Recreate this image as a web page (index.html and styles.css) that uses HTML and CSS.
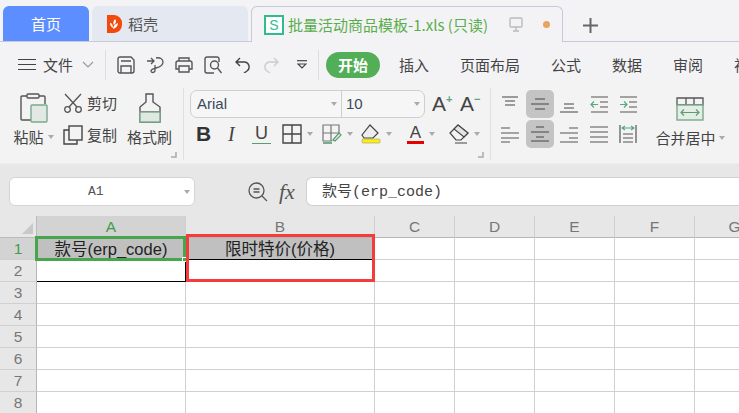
FILE: index.html
```html
<!DOCTYPE html>
<html lang="zh">
<head>
<meta charset="utf-8">
<title>批量活动商品模板-1.xls</title>
<link rel="stylesheet" href="styles.css">
</head>
<body>
<div class="app">
  <div class="tabs">
    <div class="tab tab-home">首页</div>
    <div class="tab tab-shell">
      <svg class="i20" viewBox="0 0 18 20"><path d="M1 1h7a8 8 0 0 1 8 9 8 8 0 0 1-8 9H1z" fill="#f4490c"/><path d="M9 5c2 2 1 4-1 6-1-1-1-4 1-6zM4 9c2 0 3 2 3 5-2-1-3-3-3-5zM12 9c0 3-2 5-5 6 0-3 2-5 5-6z" fill="#fff"/></svg>
      <span>稻壳</span>
    </div>
    <div class="tab tab-file">
      <span class="s-logo">S</span>
      <span class="file-name">批量活动商品模板-1.xls (只读)</span>
      <svg class="monitor" viewBox="0 0 14 15"><rect x="1" y="1" width="12" height="9" rx="1" fill="none" stroke="#bbb" stroke-width="1.4"/><path d="M7 10v4M4 14h6" stroke="#bbb" stroke-width="1.4" fill="none"/></svg>
      <span class="dot"></span>
    </div>
    <svg class="plus" viewBox="0 0 15 15"><path d="M7.5 0v15M0 7.5h15" stroke="#666" stroke-width="2"/></svg>
  </div>

  <div class="menu">
    <svg class="burger" viewBox="0 0 18 11"><path d="M0 .5h18M0 5.5h18M0 10.500h18" stroke="#444" stroke-width="1.100"/></svg>
    <span class="menu-file">文件</span>
    <svg class="chev" viewBox="0 0 12 7"><path d="M1 1l5 5 5-5" fill="none" stroke="#999" stroke-width="1.100"/></svg>
    <span class="vline"></span>
    <div class="quick">
      <svg class="i18" viewBox="0 0 18 18"><path d="M3 1h11l3 3v11a2 2 0 0 1-2 2H3a2 2 0 0 1-2-2V3a2 2 0 0 1 2-2zM4 17v-7h10v7M4 5h10" fill="none" stroke="#555" stroke-width="1.400"/></svg>
      <svg class="i18" viewBox="0 0 18 18"><path d="M1 5h7M5 2l3 3-3 3M10 2c4-1 7 1 7 4s-3 5-7 6c-3 1-5 1-5 3s3 2 4 0V9" fill="none" stroke="#555" stroke-width="1.300"/></svg>
      <svg class="i18" viewBox="0 0 18 18"><path d="M4 5V2h10v3M4 13H1V7a2 2 0 0 1 2-2h12a2 2 0 0 1 2 2v6h-3M4 10h10v6H4z" fill="none" stroke="#555" stroke-width="1.400"/></svg>
      <svg class="i18" viewBox="0 0 18 18"><path d="M15 6V3a2 2 0 0 0-2-2H3a2 2 0 0 0-2 2v12a2 2 0 0 0 2 2h7" fill="none" stroke="#555" stroke-width="1.400"/><circle cx="10.500" cy="9" r="4" fill="none" stroke="#555" stroke-width="1.400"/><path d="M13.500 12l4 5" stroke="#555" stroke-width="1.400"/></svg>
      <svg class="i16 undo" viewBox="0 0 16 16"><path d="M5 1L1 5l4 4M1 5h9a5 5 0 0 1 2 9l-3 2" fill="none" stroke="#444" stroke-width="1.400"/></svg>
      <svg class="i16 redo" viewBox="0 0 16 16"><path d="M11 1l4 4-4 4M15 5H6a5 5 0 0 0-2 9l3 2" fill="none" stroke="#ccc" stroke-width="1.400"/></svg>
      <svg class="more" viewBox="0 0 10 9"><path d="M0 .7h10" stroke="#444" stroke-width="1.200"/><path d="M1 4l4 4 4-4z" fill="none" stroke="#444" stroke-width="1.200"/></svg>
    </div>
    <span class="vline vline2"></span>
    <span class="pill">开始</span>
    <span class="m m1">插入</span>
    <span class="m m2">页面布局</span>
    <span class="m m3">公式</span>
    <span class="m m3">数据</span>
    <span class="m m3">审阅</span>
    <span class="m m3">视图</span>
  </div>

  <div class="ribbon">
    <div class="group g-clip">
      <div class="col col-paste">
        <svg class="big" viewBox="0 0 30 30"><path d="M8 3H3a1 1 0 0 0-1 1v22a1 1 0 0 0 1 1h10M20 3h5a1 1 0 0 1 1 1v7" fill="none" stroke="#555" stroke-width="1.400"/><rect x="8" y="1" width="12" height="4" rx="1" fill="none" stroke="#555" stroke-width="1.400"/><rect x="12" y="12" width="16" height="17" rx="1" fill="#e2e9e4" stroke="#7aa98b" stroke-width="1.400"/></svg>
        <span class="lbl">粘贴<i class="tri"></i></span>
      </div>
      <div class="col col-small">
        <div class="sm sm1">
          <svg class="i20" viewBox="0 0 20 20"><path d="M2 1l12 13M18 1L6 14" fill="none" stroke="#555" stroke-width="1.300"/><circle cx="4.500" cy="16.500" r="2.800" fill="none" stroke="#555" stroke-width="1.300"/><circle cx="15.500" cy="16.500" r="2.800" fill="none" stroke="#555" stroke-width="1.300"/></svg>
          <span>剪切</span>
        </div>
        <div class="sm">
          <svg class="i20" viewBox="0 0 20 20"><rect x="6" y="1" width="13" height="14" fill="none" stroke="#444" stroke-width="1.400"/><path d="M6 5H1v14h13v-4" fill="none" stroke="#444" stroke-width="1.400"/></svg>
          <span>复制</span>
        </div>
      </div>
      <div class="col col-brush">
        <svg class="big" viewBox="0 0 24 30"><path d="M8 1h7v8l7 5v15H2V14l6-5zM2 19h20" fill="none" stroke="#555" stroke-width="1.400"/><rect x="2" y="19" width="20" height="10" fill="#dfe8e1" stroke="#7aa98b" stroke-width="1.400"/></svg>
        <span class="lbl">格式刷</span>
      </div>
      <svg class="corner" viewBox="0 0 6 6"><path d="M5 0v5H0" fill="none" stroke="#aaa" stroke-width="1.500"/></svg>
    </div>

    <div class="group g-font">
      <div class="font-top">
        <div class="fontbox">
          <div class="fb-name"><span>Arial</span><i class="tri"></i></div>
          <div class="fb-size"><span>10</span><i class="tri"></i></div>
        </div>
        <span class="grow">A<sup class="sup-g">+</sup></span>
        <span class="grow">A<sup class="sup-g">−</sup></span>
      </div>
      <div class="font-bot">
        <b class="f-b">B</b>
        <em class="f-i">I</em>
        <span class="f-u">U</span>
        <span class="tool t-border">
          <svg class="i20" viewBox="0 0 20 20"><path d="M1 1h18v18H1zM10 1v18M1 10h18" fill="none" stroke="#444" stroke-width="1.400"/></svg><i class="tri"></i>
        </span>
        <span class="tool t-fill">
          <svg class="i20" viewBox="0 0 20 20"><path d="M10 17H1V1h16v9M9 1v16M1 9h16" fill="none" stroke="#777" stroke-width="1.200"/><path d="M1 19h9" stroke="#5b9d73" stroke-width="1.600"/><path d="M11 16l6-7 2 2-6 6z" fill="none" stroke="#5b9d73" stroke-width="1.200"/></svg><i class="tri"></i>
        </span>
        <span class="tool t-bucket">
          <svg class="i20" viewBox="0 0 20 20"><path d="M9 1l8 8-5 5H3L1 11z" fill="#eee" stroke="#444" stroke-width="1.200"/><rect x="1" y="15" width="18" height="4" rx="1" fill="#fff000" stroke="#999" stroke-width=".6"/></svg><i class="tri"></i>
        </span>
        <span class="tool t-color">
          <span class="a-col">A</span><i class="tri"></i>
        </span>
        <span class="tool t-erase">
          <svg class="i20" viewBox="0 0 20 20"><path d="M1 9l8-8 10 8-7 7H7zM6 19h12" fill="none" stroke="#444" stroke-width="1.200"/><path d="M9 1l10 8-4 4L5 5z" fill="#e4e4e4" stroke="#444" stroke-width="1.100"/></svg><i class="tri"></i>
        </span>
      </div>
      <svg class="corner" viewBox="0 0 6 6"><path d="M5 0v5H0" fill="none" stroke="#aaa" stroke-width="1.500"/></svg>
    </div>

    <div class="g-align">
      <div class="a-btn"><svg class="i18" viewBox="0 0 18 18"><path d="M1 3h16M4 7h10M4 11h10" stroke="#444" stroke-width="1.200" transform="translate(0 -1)"/></svg></div>
      <div class="a-btn on"><svg class="i18" viewBox="0 0 18 18"><path d="M4 4h10M0 9h18M4 14h10" stroke="#444" stroke-width="1.200"/></svg></div>
      <div class="a-btn"><svg class="i18" viewBox="0 0 18 18"><path d="M4 9h10M4 13h10M0 17h18" stroke="#444" stroke-width="1.200"/></svg></div>
      <div class="a-btn"><svg class="i18" viewBox="0 0 18 18"><path d="M1 2h17M10 7h8M10 12h8M1 17h17" stroke="#555" stroke-width="1.200"/><path d="M8 9.500H1M4 6.500l-3 3 3 3" fill="none" stroke="#5aa67d" stroke-width="1.200"/></svg></div>
      <div class="a-btn"><svg class="i18" viewBox="0 0 18 18"><path d="M1 2h17M10 7h8M10 12h8M1 17h17" stroke="#555" stroke-width="1.200"/><path d="M1 9.500h7M5 6.500l3 3-3 3" fill="none" stroke="#5aa67d" stroke-width="1.200"/></svg></div>
      <div class="a-btn"><svg class="i18" viewBox="0 0 18 18"><path d="M0 3h9M0 8h18M0 13h18M0 17h9" stroke="#555" stroke-width="1.200"/></svg></div>
      <div class="a-btn on"><svg class="i18" viewBox="0 0 18 18"><path d="M5 2h8M0 7h18M5 12h8M0 16h18" stroke="#444" stroke-width="1.200"/></svg></div>
      <div class="a-btn"><svg class="i18" viewBox="0 0 18 18"><path d="M9 3h9M0 8h18M9 13h9M0 17h18" stroke="#555" stroke-width="1.200"/></svg></div>
      <div class="a-btn"><svg class="i18" viewBox="0 0 18 18"><path d="M0 2h18M0 7h18M0 12h18M0 17h18" stroke="#555" stroke-width="1.200"/></svg></div>
      <div class="a-btn"><svg class="i18" viewBox="0 0 18 18"><path d="M1 0v18M17 0v18M4 9h10M4 13h10M4 17h10" stroke="#555" stroke-width="1.200"/><path d="M3 3h12M6 1L3 3l3 2M12 1l3 2-3 2" fill="none" stroke="#5aa67d" stroke-width="1.100"/></svg></div>
    </div>

    <div class="col col-merge">
      <svg class="merge" viewBox="0 0 28 24"><path d="M1 1h26v7H1zM10 1v7M18 1v7" fill="none" stroke="#555" stroke-width="1.300"/><rect x="1" y="8" width="26" height="15" fill="#e5ede7" stroke="#7aa98b" stroke-width="1.400"/><path d="M5 15.500h18M8 12.500l-3 3 3 3M20 12.500l3 3-3 3" fill="none" stroke="#5b9d73" stroke-width="1.200"/></svg>
      <span class="lbl">合并居中<i class="tri"></i></span>
    </div>
  </div>

  <div class="formula">
    <div class="namebox"><span>A1</span><i class="tri"></i></div>
    <svg class="zoomi" viewBox="0 0 20 20"><circle cx="8.500" cy="8.500" r="7.500" fill="none" stroke="#555" stroke-width="1.300"/><path d="M5.500 7h6M5.500 10h6M14 14l5 5" fill="none" stroke="#555" stroke-width="1.300"/></svg>
    <span class="fx">fx</span>
    <div class="fbox">款号(erp_code)</div>
  </div>

  <div class="sheet">
    <div class="hd hd-corner"><i class="corner-tri"></i></div>
    <div class="hd hd-col active">A</div>
    <div class="hd hd-col">B</div>
    <div class="hd hd-col">C</div>
    <div class="hd hd-col">D</div>
    <div class="hd hd-col">E</div>
    <div class="hd hd-col">F</div>
    <div class="hd hd-col">G</div>

    <div class="hd hd-row active">1</div>
    <div class="c title bk-b">款号(erp_code)</div><div class="c title bk-b">限时特价(价格)</div><div class="c"></div><div class="c"></div><div class="c"></div><div class="c"></div><div class="c"></div>
    <div class="hd hd-row">2</div>
    <div class="c bk-b bk-r"></div><div class="c"></div><div class="c"></div><div class="c"></div><div class="c"></div><div class="c"></div><div class="c"></div>
    <div class="hd hd-row">3</div>
    <div class="c"></div><div class="c"></div><div class="c"></div><div class="c"></div><div class="c"></div><div class="c"></div><div class="c"></div>
    <div class="hd hd-row">4</div>
    <div class="c"></div><div class="c"></div><div class="c"></div><div class="c"></div><div class="c"></div><div class="c"></div><div class="c"></div>
    <div class="hd hd-row">5</div>
    <div class="c"></div><div class="c"></div><div class="c"></div><div class="c"></div><div class="c"></div><div class="c"></div><div class="c"></div>
    <div class="hd hd-row">6</div>
    <div class="c"></div><div class="c"></div><div class="c"></div><div class="c"></div><div class="c"></div><div class="c"></div><div class="c"></div>
    <div class="hd hd-row">7</div>
    <div class="c"></div><div class="c"></div><div class="c"></div><div class="c"></div><div class="c"></div><div class="c"></div><div class="c"></div>
    <div class="hd hd-row">8</div>
    <div class="c"></div><div class="c"></div><div class="c"></div><div class="c"></div><div class="c"></div><div class="c"></div><div class="c"></div>

    <div class="sel-green"><i class="handle"></i></div>
    <div class="sel-red"></div>
  </div>
</div>
</body>
</html>
```

FILE: styles.css
```css
* { box-sizing: border-box; }
html, body { margin: 0; padding: 0; }
body {
  width: 739px;
  height: 413px;
  overflow: hidden;
  background: #fff;
  color: #444;
  font: 15px/18px "Noto Sans CJK SC", "Liberation Sans", sans-serif;
}
i { font-style: normal; display: block; }
svg { display: block; flex: none; }
.app { width: 739px; height: 413px; overflow: hidden; display: flex; flex-direction: column; }

.i16 { width: 16px; height: 16px; }
.i18 { width: 18px; height: 18px; }
.i20 { width: 20px; height: 20px; }
.tri {
  width: 0; height: 0; flex: none;
  border-left: 3.5px solid transparent;
  border-right: 3.5px solid transparent;
  border-top: 4px solid #aaa;
}

/* tabs */
.tabs {
  height: 42px;
  flex: none;
  padding: 6px 0 0 3px;
  display: flex;
  background: #f3f3f6;
  border-bottom: 1px solid #c5c9d8;
}
.tab { height: 35px; display: flex; align-items: center; border-radius: 6px 6px 0 0; flex: none; }
.tab-home { width: 86px; justify-content: center; background: #5d8eff; color: #fff; font-size: 15px; }
.tab-shell { width: 156px; margin-left: 3px; padding-left: 14px; gap: 4px; background: #e4e8f1; font-size: 15px; color: #555; }
.tab-shell .i20 { width: 18px; }
.tab-file {
  width: 312px;
  height: 36px;
  margin-left: 3px;
  padding-left: 12px;
  background: #f3f3f6;
  border: 1px solid #c5c9d8;
  border-bottom: 0;
  position: relative;
  z-index: 1;
}
.s-logo {
  width: 20px; height: 20px; flex: none;
  border: 2px solid #2fbd8b;
  background: #fff;
  color: #2fbd8b;
  font: 14px/16px "Liberation Sans", sans-serif;
  text-align: center;
}
.file-name { margin-left: 4px; width: 221px; white-space: nowrap; color: #59ad4a; font-size: 15px; }
.monitor { width: 14px; height: 15px; }
.dot { width: 7px; height: 7px; margin-left: 20px; border-radius: 50%; background: #e9a35f; }
.plus { width: 15px; height: 15px; margin: 12px 0 0 20px; }

/* menu row */
.menu {
  height: 43px;
  flex: none;
  display: flex;
  align-items: center;
  padding: 2px 0 0 18px;
  background: #f3f3f5;
  white-space: nowrap;
}
.burger { width: 18px; height: 11px; }
.menu-file { margin-left: 7px; width: 30px; flex: none; font-size: 15px; }
.chev { width: 12px; height: 7px; margin-left: 9px; }
.vline { width: 1px; height: 30px; margin-left: 11px; background: #ddd; flex: none; }
.quick { margin-left: 11px; width: 200px; flex: none; display: flex; align-items: center; gap: 11px; }
.quick .undo { margin-left: 2px; }
.quick .redo { margin-left: 1px; }
.quick .more { width: 10px; height: 9px; margin-left: 7px; }
.vline2 { margin-left: 1px; }
.pill {
  width: 54px; height: 26px; margin-left: 7px; flex: none;
  border-radius: 13px;
  background: #52ae57;
  color: #fff;
  font-size: 15px;
  font-weight: 700;
  line-height: 26px;
  text-align: center;
}
.m { flex: none; font-size: 15px; }
.m1 { margin-left: 19px; }
.m2 { margin-left: 31px; }
.m3 { margin-left: 31px; }

/* ribbon */
.ribbon {
  height: 78px;
  flex: none;
  display: flex;
  background: #f3f3f3;
  white-space: nowrap;
}
.group { position: relative; flex: none; border-right: 1px solid #e0e0e0; margin-bottom: 3px; margin-top: 3px; }
.corner { position: absolute; width: 6px; height: 6px; bottom: 2px; right: 6px; }
.g-clip { width: 184px; display: flex; padding-left: 13px; }
.col { display: flex; flex-direction: column; align-items: center; flex: none; }
.big { height: 30px; margin-bottom: 5px; }
.lbl { display: flex; align-items: center; gap: 4px; font-size: 15px; line-height: 18px; }
.col-paste { width: 41px; padding-top: 5px; }
.col-paste .big { width: 30px; }
.col-small { width: 54px; margin-left: 9px; padding-top: 5px; }
.sm { display: flex; align-items: center; gap: 4px; height: 20px; }
.sm1 { margin-bottom: 12px; }
.col-brush { width: 45px; margin-left: 10px; padding-top: 5px; }
.col-brush .big { width: 24px; }

.g-font { width: 307px; padding: 2px 0 0 6px; }
.font-top { display: flex; align-items: center; }
.fontbox {
  width: 235px; height: 28px;
  display: flex;
  background: #f6f6f6;
  border: 1px solid #cfcfcf;
  border-radius: 7px;
  font: 15px/26px "Liberation Sans", sans-serif;
  color: #3a4a5a;
}
.fb-name { width: 151px; padding: 0 4px 0 6px; border-right: 1px solid #cfcfcf; display: flex; align-items: center; justify-content: space-between; }
.fb-size { flex: 1; padding: 0 4px; display: flex; align-items: center; justify-content: space-between; }
.grow { width: 28px; margin-left: 7px; font: 21px/28px "Liberation Sans", sans-serif; color: #444; white-space: nowrap; }
.grow + .grow { margin-left: 0; }
.sup-g { font-size: 11px; line-height: 0; color: #5aa67d; font-weight: 700; vertical-align: 8px; }
.font-bot { display: flex; align-items: center; margin-top: 4px; height: 24px; }
.f-b { width: 16px; margin-left: 6px; font: bold 21px/24px "Liberation Sans", sans-serif; color: #333; }
.f-i { width: 10px; margin-left: 16px; font: italic 20px/24px "Liberation Serif", serif; color: #444; }
.f-u {
  width: 19px; height: 20px; margin-left: 14px;
  border-bottom: 1.500px solid #5b9d73;
  font: 18px/18px "Liberation Sans", sans-serif;
  text-align: center;
  color: #444;
}
.tool { display: flex; align-items: center; gap: 5px; flex: none; }
.t-border { margin-left: 11px; }
.t-fill { margin-left: 9px; }
.t-bucket { margin-left: 8px; }
.t-color { margin-left: 15px; }
.t-erase { margin-left: 14px; }
.a-col {
  width: 17px; height: 19px;
  border-bottom: 3px solid #e60000;
  font: 17px/16px "Liberation Sans", sans-serif;
  text-align: center;
  color: #444;
}
.g-align {
  flex: none;
  width: 146px;
  margin: 5px 0 0 5px;
  display: grid;
  grid-template-columns: repeat(5, 28px);
  column-gap: 1.500px;
  grid-auto-rows: 28px;
  row-gap: 2px;
  align-content: start;
}
.a-btn { display: flex; align-items: center; justify-content: center; border-radius: 5px; }
.a-btn.on { background: #c4c4c4; }
.col-merge { width: 78px; margin-left: 9px; padding-top: 12px; }
.merge { width: 28px; height: 24px; margin-bottom: 8px; }
.col-merge .lbl { gap: 3px; }

/* formula bar */
.formula {
  height: 53px;
  flex: none;
  display: flex;
  align-items: center;
  padding: 3px 0 0 9px;
  background: #e7e7e7;
  border-top: 1px solid #eee;
}
.namebox {
  width: 186px; height: 29px;
  flex: none;
  display: flex;
  align-items: center;
  padding: 0 4px 0 78px;
  justify-content: space-between;
  background: #fff;
  border: 1px solid #d5d5d5;
  border-radius: 6px;
  font: 13px/27px "Liberation Mono", monospace;
  color: #555;
}
.zoomi { width: 20px; height: 20px; margin-left: 53px; }
.fx { width: 22px; flex: none; margin-left: 11px; font: italic 22px/24px "Liberation Serif", serif; color: #555; }
.fbox {
  flex: 1;
  height: 29px;
  margin-left: 5px;
  padding-left: 15px;
  background: #fff;
  border: 1px solid #d0d0d0;
  border-right: 0;
  border-radius: 6px 0 0 6px;
  font: 15px/30px "Liberation Mono", "Noto Sans CJK SC", monospace;
  color: #444;
}

/* sheet */
.sheet {
  position: relative;
  flex: 1;
  display: grid;
  grid-template-columns: 37px 149px 189px repeat(5, 80px);
  grid-auto-rows: 22px;
  background: #fff;
}
.hd {
  background: #e7e7e7;
  color: #777;
  font: 15.500px/22px "Liberation Sans", sans-serif;
  text-align: center;
}
.hd-corner { border-right: 1px solid #bbb; border-bottom: 1px solid #bbb; position: relative; }
.corner-tri {
  position: absolute; right: 3px; bottom: 3px;
  width: 0; height: 0;
  border-left: 11px solid transparent;
  border-bottom: 11px solid #c8c8c8;
}
.hd-col { border-right: 1px solid #cfcfcf; border-bottom: 1px solid #b5b5b5; }
.hd-row { border-right: 1px solid #b5b5b5; border-bottom: 1px solid #d0d0d0; }
.hd.active { background: #d3d3d3; color: #3f9d4a; }
.c {
  border-right: 1px solid #d0d0d0;
  border-bottom: 1px solid #d0d0d0;
  font: 16.500px/22px "Liberation Sans", "Noto Sans CJK SC", sans-serif;
  color: #222;
  text-align: center;
  white-space: nowrap;
}
.c.title { background: #c0c0c0; }
.bk-b { border-bottom-color: #000; }
.bk-r { border-right-color: #000; }
.sel-green {
  position: absolute;
  left: 35px; top: 20px;
  width: 151px; height: 25px;
  border: 3px solid #47a54d;
}
.handle {
  position: absolute; right: -4px; bottom: -4px;
  width: 5px; height: 5px;
  background: #47a54d;
  border: 1px solid #fff;
}
.sel-red {
  position: absolute;
  left: 186px; top: 18px;
  width: 189px; height: 48px;
  border: 3px solid #f53b3b;
}
```
